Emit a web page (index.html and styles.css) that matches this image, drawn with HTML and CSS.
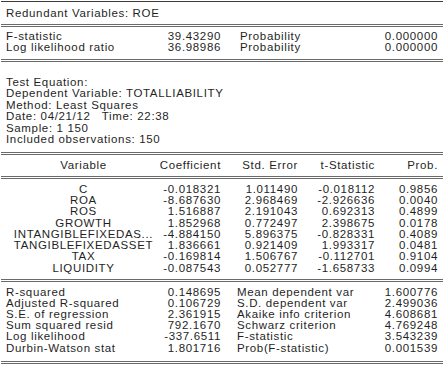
FILE: index.html
```html
<!DOCTYPE html>
<html>
<head>
<meta charset="utf-8">
<link rel="stylesheet" href="styles.css">
</head>
<body>
<div class="sheet">
  <div class="title">Redundant Variables: ROE</div>
  <div class="pair top">
    <span class="lbl">F-statistic</span><span class="num">39.43290</span><span class="lbl2">Probability</span><span class="num">0.000000</span>
    <span class="lbl">Log likelihood ratio</span><span class="num">36.98986</span><span class="lbl2">Probability</span><span class="num">0.000000</span>
  </div>
  <div class="info">
    <div>Test Equation:</div>
    <div>Dependent Variable: TOTALLIABILITY</div>
    <div>Method: Least Squares</div>
    <div>Date: 04/21/12&nbsp;&nbsp; Time: 22:38</div>
    <div>Sample: 1 150</div>
    <div>Included observations: 150</div>
  </div>
  <div class="coef head">
    <span class="var">Variable</span><span class="num">Coefficient</span><span class="num">Std. Error</span><span class="num">t-Statistic</span><span class="num">Prob.</span>
  </div>
  <div class="coef body">
    <span class="var">C</span><span class="num">-0.018321</span><span class="num">1.011490</span><span class="num">-0.018112</span><span class="num">0.9856</span>
    <span class="var">ROA</span><span class="num">-8.687630</span><span class="num">2.968469</span><span class="num">-2.926636</span><span class="num">0.0040</span>
    <span class="var">ROS</span><span class="num">1.516887</span><span class="num">2.191043</span><span class="num">0.692313</span><span class="num">0.4899</span>
    <span class="var">GROWTH</span><span class="num">1.852968</span><span class="num">0.772497</span><span class="num">2.398675</span><span class="num">0.0178</span>
    <span class="var">INTANGIBLEFIXEDAS...</span><span class="num">-4.884150</span><span class="num">5.896375</span><span class="num">-0.828331</span><span class="num">0.4089</span>
    <span class="var">TANGIBLEFIXEDASSET</span><span class="num">1.836661</span><span class="num">0.921409</span><span class="num">1.993317</span><span class="num">0.0481</span>
    <span class="var">TAX</span><span class="num">-0.169814</span><span class="num">1.506767</span><span class="num">-0.112701</span><span class="num">0.9104</span>
    <span class="var">LIQUIDITY</span><span class="num">-0.087543</span><span class="num">0.052777</span><span class="num">-1.658733</span><span class="num">0.0994</span>
  </div>
  <div class="pair stats">
    <span class="lbl">R-squared</span><span class="num">0.148695</span><span class="lbl2">Mean dependent var</span><span class="num">1.600776</span>
    <span class="lbl">Adjusted R-squared</span><span class="num">0.106729</span><span class="lbl2">S.D. dependent var</span><span class="num">2.499036</span>
    <span class="lbl">S.E. of regression</span><span class="num">2.361915</span><span class="lbl2">Akaike info criterion</span><span class="num">4.608681</span>
    <span class="lbl">Sum squared resid</span><span class="num">792.1670</span><span class="lbl2">Schwarz criterion</span><span class="num">4.769248</span>
    <span class="lbl">Log likelihood</span><span class="num">-337.6511</span><span class="lbl2">F-statistic</span><span class="num">3.543239</span>
    <span class="lbl">Durbin-Watson stat</span><span class="num">1.801716</span><span class="lbl2">Prob(F-statistic)</span><span class="num">0.001539</span>
  </div>
</div>
</body>
</html>
```

FILE: styles.css
```css
html, body {
  margin: 0;
  padding: 0;
  background: #ffffff;
}
body {
  font-family: "Liberation Sans", Arial, sans-serif;
  font-size: 11.5px;
  letter-spacing: 0.65px;
  color: #1f1f1f;
  line-height: 11.3px;
}
.sheet {
  width: 442px;
  margin: 1px 0 0 1px;
  border-top: 1px solid #3c3c3c;
}
.title {
  padding: 6px 0 5px 5px;
  border-bottom: 3px double #6a6a6a;
}
.pair {
  display: grid;
  grid-template-columns: 165px 55px 1fr auto;
  padding-right: 5px;
  border-bottom: 3px double #6a6a6a;
}
.pair > span { white-space: nowrap; }
.pair .lbl { padding-left: 5px; }
.pair .num { justify-self: end; }
.top {
  line-height: 11px;
  padding-top: 4px;
  padding-bottom: 6px;
}
.top .lbl2 { padding-left: 19px; }
.stats {
  line-height: 11.2px;
  padding-top: 4.4px;
  padding-bottom: 7.5px;
}
.stats .lbl2 { padding-left: 16px; }
.info {
  line-height: 11.5px;
  padding: 14.3px 0 6.7px 5px;
  border-bottom: 3px double #6a6a6a;
}
.coef {
  display: grid;
  grid-template-columns: 165px 55px 77px 77px 63px;
  padding-right: 5px;
}
.coef > span { white-space: nowrap; }
.coef .var { text-align: center; }
.coef .num { justify-self: end; }
.head {
  padding-top: 4.4px;
  padding-bottom: 5.3px;
  border-bottom: 3px double #6a6a6a;
}
.body {
  padding-top: 4.4px;
  padding-bottom: 5.2px;
  border-bottom: 3px double #6a6a6a;
}
```
